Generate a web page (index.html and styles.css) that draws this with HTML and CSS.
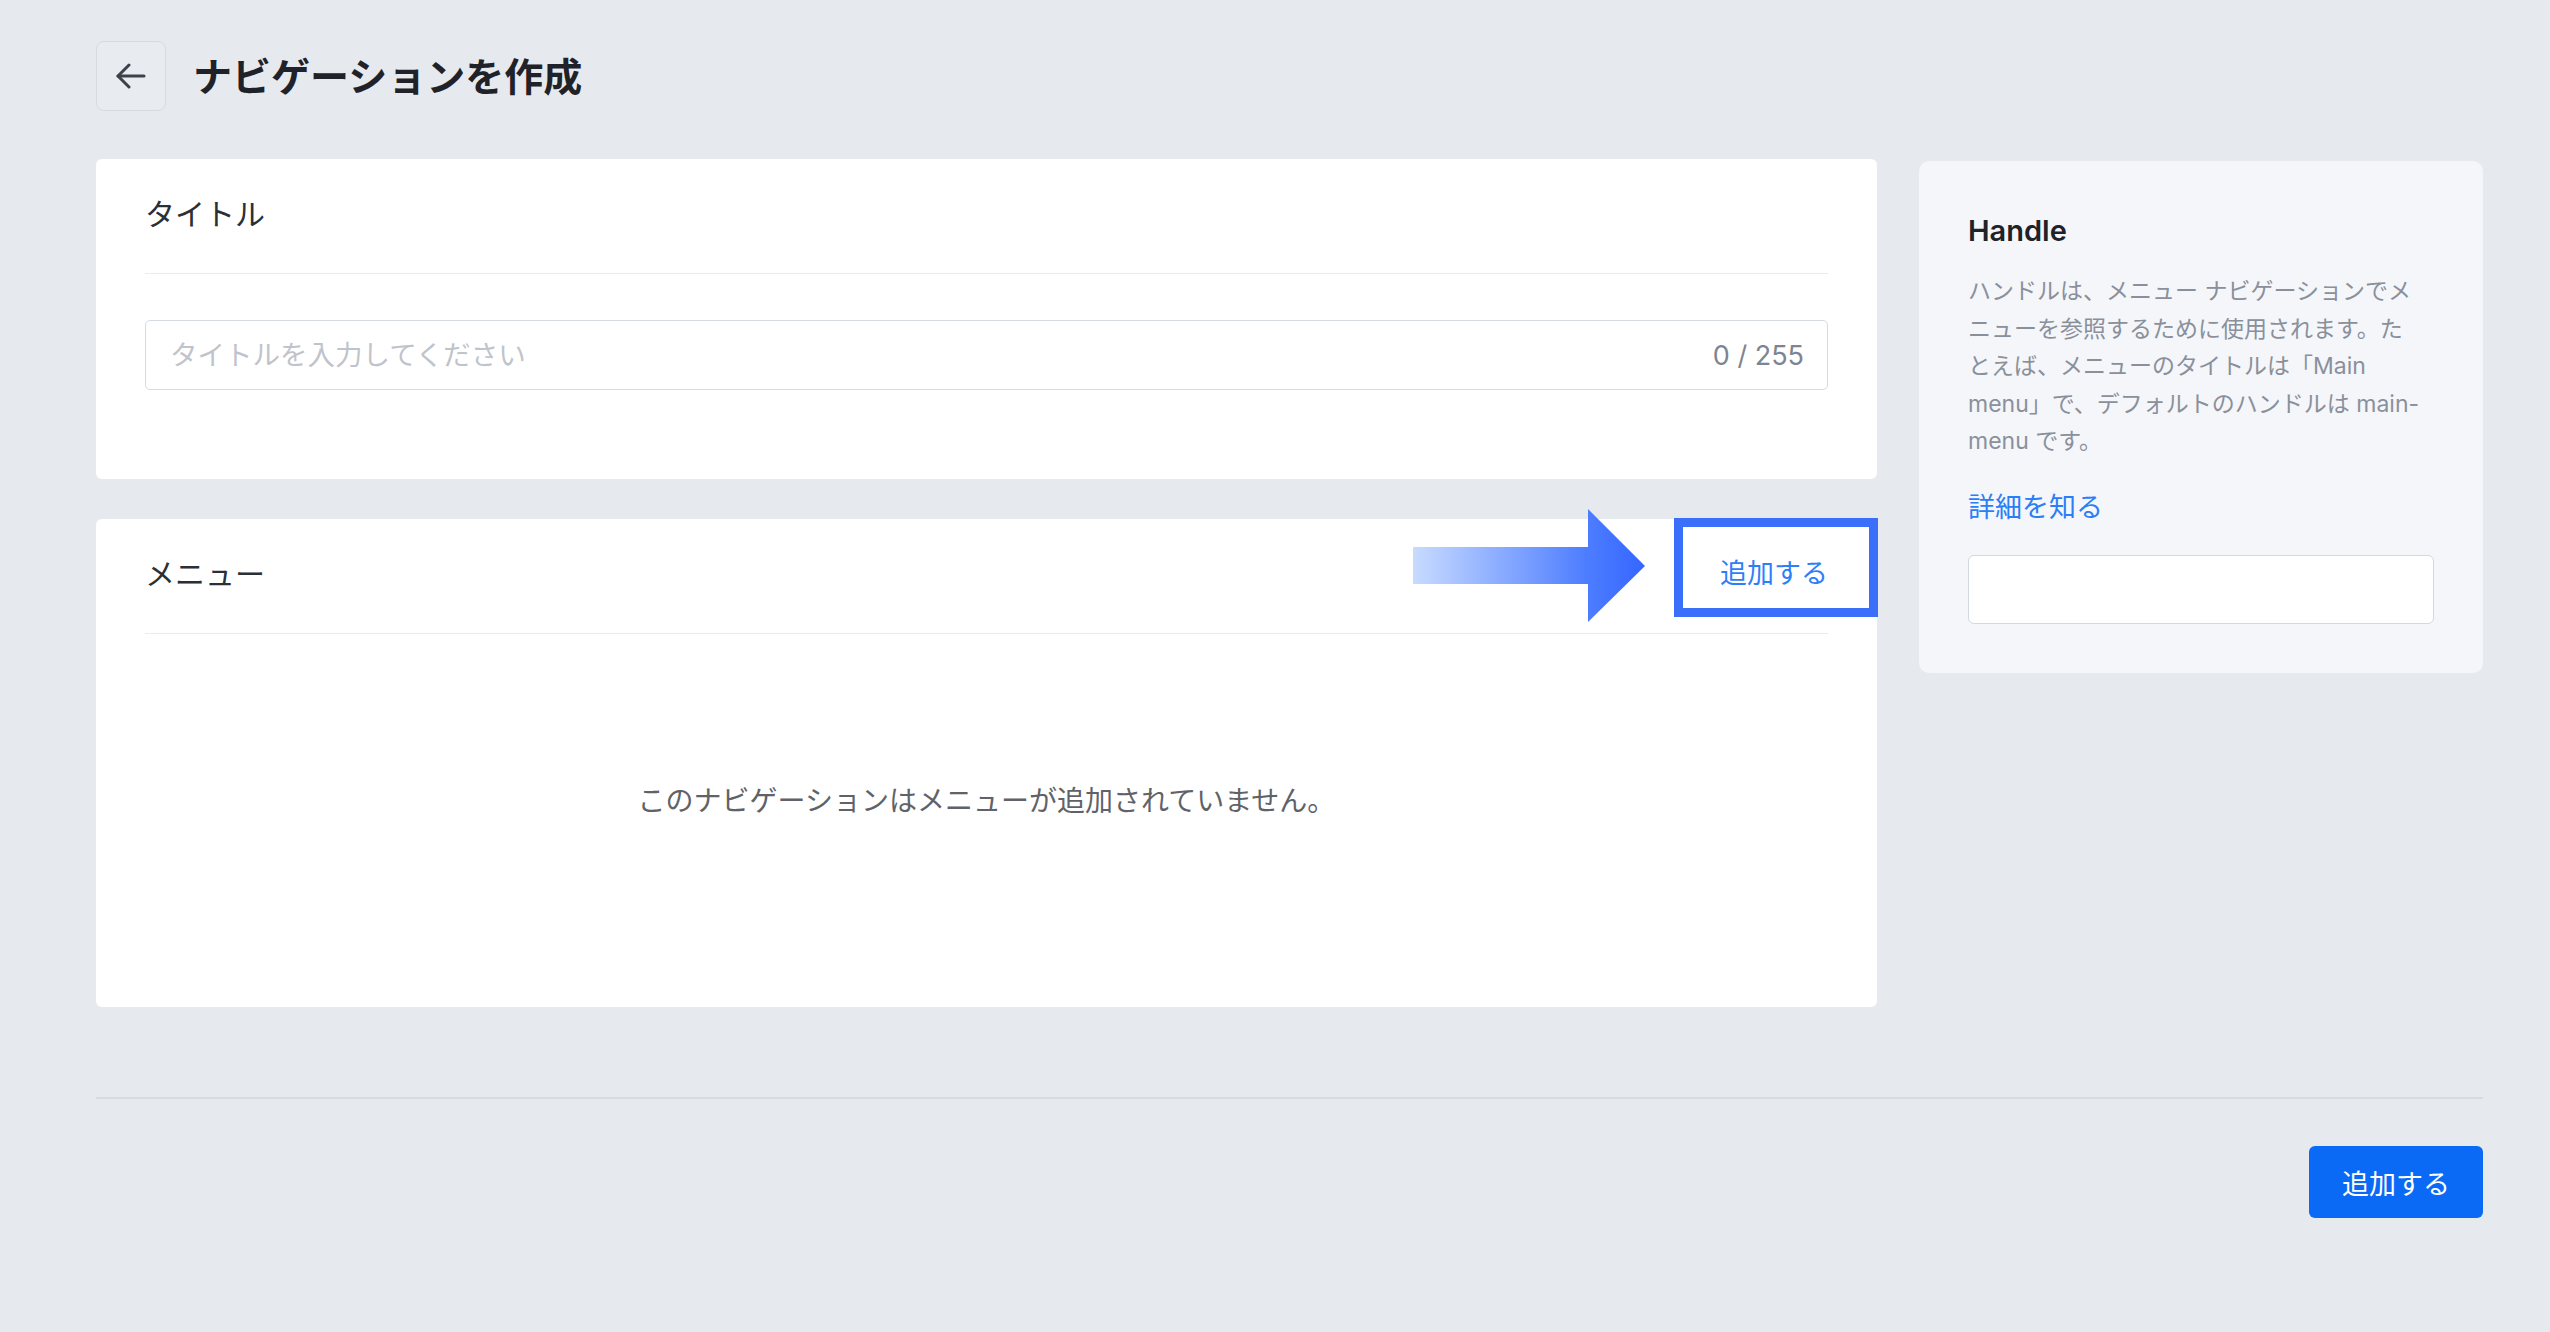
FILE: index.html
```html
<!DOCTYPE html>
<html lang="ja">
<head>
    <meta charset="UTF-8">
    <meta name="viewport" content="width=device-width, initial-scale=1.0">
    <title>ナビゲーションを作成</title>
    <link rel="stylesheet" href="styles.css">
</head>
<body>
    <div class="page">
        <header class="page-header">
            <button class="back-btn" aria-label="戻る">
                <svg width="30" height="26" viewBox="0 0 30 26" fill="none" stroke="#3d424a" stroke-width="3" stroke-linecap="round" stroke-linejoin="round">
                    <path d="M28 13H2"/>
                    <path d="M13 2L2 13l11 11"/>
                </svg>
            </button>
            <h1>ナビゲーションを作成</h1>
        </header>

        <div class="layout">
            <div class="main-col">
                <section class="card">
                    <div class="card-header">
                        <h2>タイトル</h2>
                    </div>
                    <div class="card-body">
                        <div class="text-field">
                            <input type="text" placeholder="タイトルを入力してください">
                            <span class="counter">0 / 255</span>
                        </div>
                    </div>
                </section>

                <section class="card">
                    <div class="card-header">
                        <h2>メニュー</h2>
                        <span class="add-link">追加する
                            <!-- annotation arrow pointing at the button -->
                            <svg class="hint-arrow" viewBox="0 0 232 113">
                                <defs>
                                    <linearGradient id="arrowGrad" x1="0" y1="0" x2="232" y2="0" gradientUnits="userSpaceOnUse">
                                        <stop offset="0" stop-color="#c8dbff"/>
                                        <stop offset="0.75" stop-color="#4d7dff"/>
                                        <stop offset="1" stop-color="#3566ff"/>
                                    </linearGradient>
                                </defs>
                                <path d="M0 38H175V0L232 57L175 113V75H0Z" fill="url(#arrowGrad)"/>
                            </svg>
                        </span>
                    </div>
                    <div class="empty">このナビゲーションはメニューが追加されていません。</div>
                </section>
            </div>

            <aside class="side-panel">
                <h3>Handle</h3>
                <p class="handle-desc">ハンドルは、メニュー ナビゲーションでメニューを参照するために使用されます。たとえば、メニューのタイトルは「Main menu」で、デフォルトのハンドルは main-menu です。</p>
                <a class="learn-more" href="#">詳細を知る</a>
                <input class="handle-input" type="text">
            </aside>
        </div>

        <div class="footer">
            <button class="primary-btn">追加する</button>
        </div>
    </div>
</body>
</html>
```

FILE: styles.css
```css
* {
    margin: 0;
    padding: 0;
    box-sizing: border-box;
    font-family: "Inter", "Noto Sans CJK JP", sans-serif;
}

body {
    min-height: 100vh;
    background: #e6e9ee;
}

.page {
    padding: 41px 67px 60px 96px;
}

.page-header {
    display: flex;
    align-items: center;
    gap: 27px;
}

.back-btn {
    width: 70px;
    height: 70px;
    display: flex;
    align-items: center;
    justify-content: center;
    background: #e8ebf0;
    border: 1px solid #d6dae3;
    border-radius: 8px;
    cursor: pointer;
}

h1 {
    font-size: 39px;
    font-weight: 700;
    line-height: 1;
    color: #1f2329;
}

.layout {
    display: grid;
    grid-template-columns: 1fr 564px;
    column-gap: 42px;
    align-items: start;
    margin-top: 48px;
}

.main-col {
    display: flex;
    flex-direction: column;
    gap: 40px;
}

.card {
    background: #fff;
    border-radius: 6px;
    padding: 0 49px;
}

.card-header {
    display: flex;
    align-items: center;
    justify-content: space-between;
    padding: 35px 0 39px;
    border-bottom: 1px solid #e9ecf1;
}

.card-header h2 {
    font-size: 30px;
    font-weight: 400;
    line-height: 40px;
    color: #2b2f36;
}

.card-body {
    padding: 46px 0 89px;
}

.text-field {
    display: flex;
    align-items: center;
    height: 70px;
    padding: 0 23px 0 24px;
    border: 1px solid #d5dae3;
    border-radius: 5px;
}

.text-field input {
    flex: 1;
    border: none;
    outline: none;
    background: transparent;
    font-size: 27.5px;
    color: #303133;
}

.text-field input::placeholder {
    color: #bfc4cc;
}

.counter {
    font-size: 27px;
    color: #7e8591;
}

.add-link {
    position: relative;
    font-size: 27px;
    line-height: 40px;
    color: #2d7ff9;
    cursor: pointer;
}

.add-link::after {
    content: "";
    position: absolute;
    left: -46px;
    right: -50px;
    top: -36px;
    bottom: -23px;
    border: 9px solid #3b6ef9;
}

.hint-arrow {
    position: absolute;
    left: -307px;
    top: -45px;
    width: 232px;
    height: 113px;
}

.empty {
    padding: 149px 0 188px;
    text-align: center;
    font-size: 28px;
    line-height: 36px;
    color: #5f6369;
}

.side-panel {
    margin-top: 2px;
    padding: 50px 49px 49px;
    background: #f4f6fa;
    border-radius: 10px;
}

.side-panel h3 {
    font-size: 29px;
    font-weight: 600;
    line-height: 40px;
    color: #1f2329;
}

.handle-desc {
    max-width: 456px;
    margin-top: 22px;
    font-size: 23px;
    line-height: 37.5px;
    color: #8a909b;
}

.learn-more {
    display: block;
    margin-top: 27px;
    font-size: 27px;
    line-height: 40px;
    color: #2a7ef7;
    text-decoration: none;
}

.handle-input {
    display: block;
    width: 100%;
    height: 69px;
    margin-top: 27px;
    background: #fff;
    border: 1px solid #d3d8e2;
    border-radius: 6px;
    outline: none;
}

.footer {
    display: flex;
    justify-content: flex-end;
    margin-top: 90px;
    padding-top: 47px;
    border-top: 2px solid #d5dae4;
}

.primary-btn {
    height: 72px;
    padding: 0 33px;
    background: #0a6af5;
    color: #fff;
    border: none;
    border-radius: 6px;
    font-size: 27px;
    cursor: pointer;
}
```
